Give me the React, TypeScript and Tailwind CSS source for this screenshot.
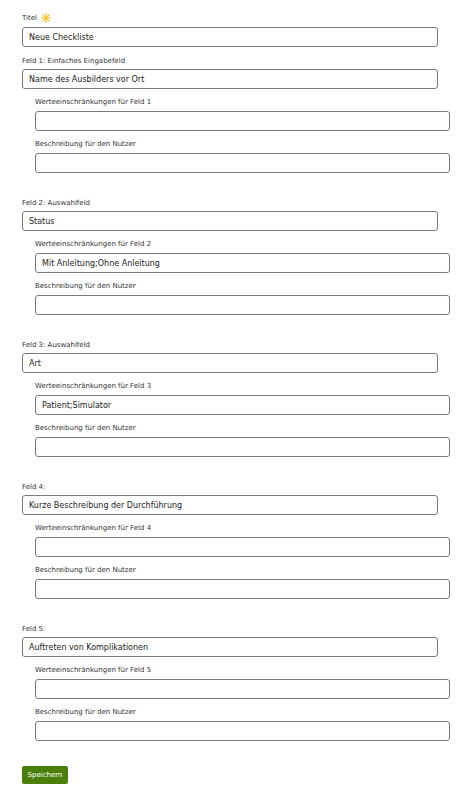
import React from "react";

const font = { fontFamily: '"DejaVu Sans", Verdana, sans-serif' };

function Star() {
  return (
    <svg width="10" height="10" viewBox="0 0 10 10" className="ml-[4px] inline-block">
      <g stroke="#f7c21b" strokeWidth="1.1" strokeLinecap="round">
        <line x1="5" y1="0.6" x2="5" y2="9.4" />
        <line x1="0.6" y1="5" x2="9.4" y2="5" />
        <line x1="1.9" y1="1.9" x2="8.1" y2="8.1" />
        <line x1="8.1" y1="1.9" x2="1.9" y2="8.1" />
      </g>
      <circle cx="5" cy="5" r="1.1" fill="#f7c21b" />
    </svg>
  );
}

function Label({ children, tight }: { children: React.ReactNode; tight?: boolean }) {
  return (
    <div
      className={`flex items-center h-[10px] ${tight ? "mb-[3px]" : "mb-[4px]"} text-[7px] leading-[10px] text-[#333]`}
    >
      {children}
    </div>
  );
}

function Input({ value, w }: { value?: string; w: string }) {
  return (
    <input
      readOnly
      defaultValue={value}
      className={`${w} block h-[20px] rounded-[3px] border border-[#7a7a7a] bg-white px-[6px] text-[8px] text-[#222] outline-none`}
      style={font}
    />
  );
}

type Field = { label: string; value: string; werte: string; n: number };

const fields: Field[] = [
  { n: 1, label: "Feld 1: Einfaches Eingabefeld", value: "Name des Ausbilders vor Ort", werte: "" },
  { n: 2, label: "Feld 2: Auswahlfeld", value: "Status", werte: "Mit Anleitung;Ohne Anleitung" },
  { n: 3, label: "Feld 3: Auswahlfeld", value: "Art", werte: "Patient;Simulator" },
  { n: 4, label: "Feld 4:", value: "Kurze Beschreibung der Durchführung", werte: "" },
  { n: 5, label: "Feld 5:", value: "Auftreten von Komplikationen", werte: "" },
];

export default function App() {
  return (
    <div className="w-[470px] min-h-[796px] bg-white pt-[13px] pl-[22px]" style={font}>
      <Label>
        Titel <Star />
      </Label>
      <Input w="w-[416px]" value="Neue Checkliste" />
      <div className="mt-[9px] flex flex-col gap-[25px]">
        {fields.map((f) => (
          <div key={f.n}>
            <Label tight>{f.label}</Label>
            <Input w="w-[416px]" value={f.value} />
            <div className="pl-[13px] mt-[8px]">
              <Label>Werteeinschränkungen für Feld {f.n}</Label>
              <Input w="w-[415px]" value={f.werte} />
              <div className="mt-[8px]">
                <Label>Beschreibung für den Nutzer</Label>
                <Input w="w-[415px]" value="" />
              </div>
            </div>
          </div>
        ))}
      </div>
      <button
        className="mt-[25px] h-[18px] w-[46px] rounded-[2px] bg-[#4b7f0c] text-[7px] text-white"
        style={font}
      >
        Speichern
      </button>
    </div>
  );
}
